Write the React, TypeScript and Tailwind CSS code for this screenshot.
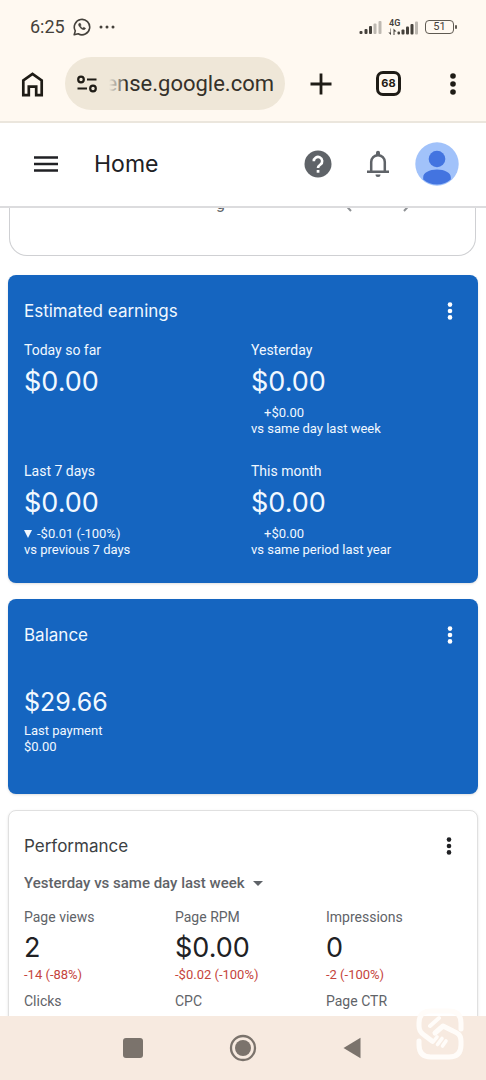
import type { ReactNode } from "react";

type Metric = { label: string; value?: string; change?: string; note?: string; down?: boolean };

const earnings: Metric[] = [
  { label: "Today so far", value: "$0.00" },
  { label: "Yesterday", value: "$0.00", change: "+$0.00", note: "vs same day last week" },
  { label: "Last 7 days", value: "$0.00", change: "-$0.01 (-100%)", note: "vs previous 7 days", down: true },
  { label: "This month", value: "$0.00", change: "+$0.00", note: "vs same period last year" },
];

const performance: Metric[] = [
  { label: "Page views", value: "2", change: "-14 (-88%)" },
  { label: "Page RPM", value: "$0.00", change: "-$0.02 (-100%)" },
  { label: "Impressions", value: "0", change: "-2 (-100%)" },
  { label: "Clicks" },
  { label: "CPC" },
  { label: "Page CTR" },
];

function Dots({ className }: { className: string }) {
  return (
    <svg viewBox="0 0 24 24" fill="currentColor" className={className} aria-hidden="true">
      <circle cx="12" cy="5.6" r="2.3" />
      <circle cx="12" cy="12" r="2.3" />
      <circle cx="12" cy="18.4" r="2.3" />
    </svg>
  );
}

function StatusBar() {
  return (
    <div className="flex h-[54px] items-center justify-between pr-[29px] pl-[30px] text-[#45413b]">
      <div className="flex items-center gap-2">
        <span className="font-[Roboto,sans-serif] text-lg">6:25</span>
        <svg viewBox="0 0 18 18" className="size-[18px]" fill="none" stroke="currentColor" aria-hidden="true">
          <path d="M1.2 16.8 2.3 12.9A7.7 7.7 0 1 1 5.2 15.8Z" strokeWidth="1.6" strokeLinejoin="round" />
          <path d="M6.2 5.3c-1 .8-.9 2.2.8 4.1 1.9 2 3.9 2.9 5.2 1.7l.4-.8-1.9-1-1 .9C8.6 9.7 7.9 8.9 7.400 8l.7-.9-.9-1.900Z" fill="currentColor" strokeWidth=".5" />
        </svg>
        <svg viewBox="0 0 16 4" className="h-1 w-4" fill="currentColor" aria-hidden="true">
          <circle cx="2" cy="2" r="1.5" />
          <circle cx="8" cy="2" r="1.5" />
          <circle cx="14" cy="2" r="1.5" />
        </svg>
      </div>
      <div className="flex items-center gap-[6px]">
        <svg viewBox="0 0 23 15" className="h-[15px] w-[23px]" fill="currentColor" aria-hidden="true">
          <rect x="0.5" y="11" width="3" height="3" rx="1" />
          <rect x="5.5" y="9" width="3" height="5" rx="1" />
          <rect x="10" y="6" width="3" height="8" rx="1" />
          <rect x="14.5" y="3.5" width="3" height="10.5" rx="1" opacity=".35" />
          <rect x="19.5" y="1" width="3" height="13" rx="1" opacity=".35" />
        </svg>
        <svg viewBox="0 0 31 18" className="h-[18px] w-[31px]" fill="currentColor" aria-label="4G">
          <text x="1" y="8" fontSize="9" fontWeight="600" fontFamily="Roboto, sans-serif">4G</text>
          <path d="M2.5 10.5v4H.3L3 17v-6.5ZM5.5 17v-6.5l3 3H6.500V17Z" />
          <rect x="9.500" y="13.5" width="2.5" height="3" rx="1" />
          <rect x="13.5" y="11.5" width="3" height="5" rx="1" />
          <rect x="18" y="8.5" width="3" height="8" rx="1" />
          <rect x="22.500" y="6" width="3" height="10.5" rx="1" />
          <rect x="27" y="3.5" width="3" height="13" rx="1" opacity=".35" />
        </svg>
        <div className="flex items-center">
          <span className="flex h-[14px] w-[29px] items-center justify-center rounded-[4px] border border-[#5f5a52] font-[Roboto,sans-serif] text-[11px]">
            51
          </span>
          <span className="ml-px h-1 w-[2px] rounded-full bg-[#5f5a52]" />
        </div>
      </div>
    </div>
  );
}

function BrowserBar() {
  return (
    <div className="flex h-[67px] items-start pr-5 pl-5 text-[#1f1c16]">
      <button type="button" aria-label="Home page" className="mt-[17px] mr-5">
        <svg viewBox="0 0 25 26" className="h-[26px] w-[25px]" fill="none" stroke="currentColor" strokeWidth="2.7" aria-hidden="true">
          <path d="M3.300 24.1V9.5L12.5 2.800l9.200 6.700v14.6h-5.500v-8.500H8.800v8.500Z" />
        </svg>
      </button>
      <div className="mt-[3px] flex h-[53px] flex-1 items-center gap-[11px] overflow-hidden rounded-full bg-[#efe7d8] px-[11px]">
        <svg viewBox="0 0 22 18" className="h-[18px] w-[22px] shrink-0" fill="none" stroke="currentColor" strokeWidth="2.2" aria-hidden="true">
          <circle cx="5" cy="4.500" r="2.800" />
          <path d="M11 4.500h9.500M1.500 13.500h9.500" />
          <circle cx="17" cy="13.500" r="2.800" />
        </svg>
        <div className="relative flex h-8 min-w-0 flex-1 justify-end overflow-hidden font-[Roboto,sans-serif] text-[22px] leading-8 text-[#35312a]">
          <span className="whitespace-nowrap">ense.google.com</span>
          <span className="absolute inset-y-0 left-0 w-4 bg-linear-to-r from-[#efe7d8] to-[#efe7d8]/20" />
        </div>
      </div>
      <button type="button" aria-label="New tab" className="mt-[18px] ml-[24px]">
        <svg viewBox="0 0 24 24" className="size-6" stroke="currentColor" strokeWidth="2.8" aria-hidden="true">
          <path d="M12 1.5v21M1.5 12h21" />
        </svg>
      </button>
      <button
        type="button"
        aria-label="68 open tabs"
        className="mt-[17px] ml-[43px] flex size-[25px] items-center justify-center rounded-[7px] border-3 border-[#1f1c16] font-[Inter,sans-serif] text-[11px] font-bold"
      >
        68
      </button>
      <button type="button" aria-label="Browser menu" className="mt-[17px] ml-[39px]">
        <svg viewBox="0 0 26 26" className="size-[26px]" fill="currentColor" aria-hidden="true">
          <circle cx="13" cy="5" r="2.800" />
          <circle cx="13" cy="13" r="2.800" />
          <circle cx="13" cy="21" r="2.800" />
        </svg>
      </button>
    </div>
  );
}

function AppHeader() {
  return (
    <header className="flex h-[85px] shrink-0 items-center border-b-2 border-[#dcdcde] bg-white pr-[27px] pb-[2px] pl-[34px] text-[#202124]">
      <button type="button" aria-label="Main menu">
        <svg viewBox="0 0 24 16" className="h-4 w-6" stroke="currentColor" strokeWidth="2.5" aria-hidden="true">
          <path d="M0 1.5h24M0 8h24M0 14.5h24" />
        </svg>
      </button>
      <h1 className="ml-9 flex-1 font-[Inter,sans-serif] text-[23px] leading-8">Home</h1>
      <button type="button" aria-label="Help" className="text-[#5f6368]">
        <svg viewBox="0 0 28 28" className="size-7" aria-hidden="true">
          <circle cx="14" cy="14" r="13.5" fill="currentColor" />
          <path d="M9.800 11.200a4.200 4.200 0 1 1 6.700 3.300c-1.500 1.100-2.500 1.800-2.500 3.600" fill="none" stroke="#fff" strokeWidth="2.600" />
          <rect x="12.700" y="20" width="2.700" height="2.700" fill="#fff" />
        </svg>
      </button>
      <button type="button" aria-label="Notifications" className="mr-[25px] ml-[34px] text-[#5f6368]">
        <svg viewBox="0 0 24 28" className="h-7 w-6" fill="none" stroke="currentColor" strokeWidth="2.500" aria-hidden="true">
          <path d="M5.200 22v-10a6.800 6.800 0 0 1 13.600 0V22M1 21.800h22" />
          <path d="M10 5.500V2.800a2 2 0 0 1 4 0v2.700ZM9.500 24.500h5a2.500 2.500 0 0 1-5 0Z" fill="currentColor" stroke="none" />
        </svg>
      </button>
      <button type="button" aria-label="Account">
        <svg viewBox="0 0 44 44" className="size-11" aria-hidden="true">
          <circle cx="22" cy="22" r="21.700" fill="#a1c2fa" />
          <circle cx="22" cy="17" r="8.300" fill="#4374e0" />
          <path d="M8.200 37.500v-2.300c0-4.400 6.300-7.600 13.800-7.600s13.800 3.200 13.800 7.600v2.300a21.700 21.700 0 0 1-27.600 0Z" fill="#4374e0" />
        </svg>
      </button>
    </header>
  );
}

function Card({ title, blue, children }: { title: string; blue?: boolean; children: ReactNode }) {
  return (
    <section
      className={
        blue
          ? "rounded-lg bg-[#1565c0] pt-6 pl-4 text-[#f1f8ff] shadow-sm"
          : "rounded-lg border border-[#e0e0e0] bg-white pt-[23px] pb-10 pl-[15px] text-[#5f6368] shadow-sm"
      }
    >
      <div className="flex items-center justify-between pr-4">
        <h2 className={blue ? "font-[Inter,sans-serif] text-[17px] leading-6" : "font-[Inter,sans-serif] text-[17px] leading-6 text-[#3c4043]"}>
          {title}
        </h2>
        <button type="button" aria-label={`${title} options`} className={blue ? "text-white" : "text-[#202124]"}>
          <Dots className="size-6" />
        </button>
      </div>
      {children}
    </section>
  );
}

export default function App() {
  return (
    <div className="flex h-screen flex-col overflow-hidden bg-white font-[Roboto,sans-serif]">
      <div className="shrink-0 border-b-2 border-[#ebe6dd] bg-[#fff9f1]">
        <StatusBar />
        <BrowserBar />
      </div>
      <AppHeader />
      <main className="flex min-h-0 flex-1 flex-col overflow-hidden px-2">
        <div className="-mt-6 mr-[2px] ml-px h-[72px] shrink-0 rounded-b-[18px] border border-t-0 border-[#cfd0d3] text-[#5f6368]">
          <div className="flex h-8 items-end">
            <span className="ml-[206px] flex-1 text-base leading-6">g</span>
            <div className="mr-[63px] mb-1 flex gap-[49px] opacity-70">
              <svg viewBox="0 0 10 16" className="h-4 w-[10px] -scale-x-100" fill="none" stroke="currentColor" strokeWidth="2" aria-hidden="true">
                <path d="m2 2 6 6.500-6 6.500" />
              </svg>
              <svg viewBox="0 0 10 16" className="h-4 w-[10px]" fill="none" stroke="currentColor" strokeWidth="2" aria-hidden="true">
                <path d="m2 2 6 6.500-6 6.500" />
              </svg>
            </div>
          </div>
        </div>
        <div className="mt-[19px] flex flex-col gap-4">
          <Card title="Estimated earnings" blue>
            <div className="mt-[17px] grid grid-cols-2 gap-y-6 pb-[25px]">
              {earnings.map((m) => (
                <div key={m.label}>
                  <p className="text-sm leading-5">{m.label}</p>
                  <p className="mt-px mb-[2px] font-[Inter,sans-serif] text-[27px] leading-[42px]">{m.value}</p>
                  {m.change && (
                    <p className="flex items-center text-[13px] leading-4">
                      <span className="w-[13px]">
                        {m.down && (
                          <svg viewBox="0 0 8 8" className="size-2" fill="currentColor" aria-hidden="true">
                            <path d="M0 0h8L4 8Z" />
                          </svg>
                        )}
                      </span>
                      {m.change}
                    </p>
                  )}
                  {m.note && <p className="text-[13px] leading-4">{m.note}</p>}
                </div>
              ))}
            </div>
          </Card>
          <Card title="Balance" blue>
            <p className="mt-[34px] font-[Inter,sans-serif] text-[25px] leading-[42px]">$29.66</p>
            <div className="pb-[39px] text-[13px] leading-4">
              <p>Last payment</p>
              <p>$0.00</p>
            </div>
          </Card>
          <Card title="Performance">
            <div className="mt-[15px] flex h-5 items-center">
              <select aria-label="Comparison period" className="appearance-none text-[15px] leading-5 font-medium">
                <option>Yesterday vs same day last week</option>
              </select>
              <svg viewBox="0 0 10 5" className="ml-2 h-[5px] w-[10px]" fill="currentColor" aria-hidden="true">
                <path d="M0 0h10L5 5Z" />
              </svg>
            </div>
            <div className="mt-[14px] grid grid-cols-3 gap-y-2">
              {performance.map((m) => (
                <div key={m.label}>
                  <p className="text-sm leading-5">{m.label}</p>
                  {m.value && <p className="mt-[2px] font-[Inter,sans-serif] text-[27px] leading-[38px] text-[#202124]">{m.value}</p>}
                  {m.change && <p className="text-[13px] leading-4 text-[#c5443c]">{m.change}</p>}
                </div>
              ))}
            </div>
          </Card>
        </div>
      </main>
      <nav className="relative grid h-16 shrink-0 grid-cols-[1fr_auto_1fr] items-center bg-[#f7eae0] text-[#7b736c]">
        <button type="button" aria-label="Recent apps" className="mr-[86px] justify-self-end">
          <svg viewBox="0 0 20 20" className="size-5" fill="currentColor" aria-hidden="true">
            <rect width="20" height="20" rx="3" />
          </svg>
        </button>
        <button type="button" aria-label="Device home">
          <svg viewBox="0 0 28 28" className="size-7" aria-hidden="true">
            <circle cx="14" cy="14" r="12" fill="none" stroke="currentColor" strokeWidth="2.300" />
            <circle cx="14" cy="14" r="8" fill="currentColor" />
          </svg>
        </button>
        <button type="button" aria-label="Back" className="ml-[86px] justify-self-start">
          <svg viewBox="0 0 18 22" className="h-[22px] w-[18px]" fill="currentColor" aria-hidden="true">
            <path d="M17.500.8v20.400L.5 11Z" />
          </svg>
        </button>
        <svg
          viewBox="0 0 48 52"
          className="absolute right-[22px] bottom-5 h-[52px] w-12"
          fill="none"
          stroke="#fffcf9"
          strokeWidth="5"
          strokeLinecap="round"
          strokeLinejoin="round"
          aria-hidden="true"
        >
          <path d="M45 21v-6C45 7 41 3 33 3H15C7 3 3 7 3 15v3c0 5 2 7 5 9l8 6" />
          <path d="M3 33v4c0 8 4 12 12 12h18c8 0 12-4 12-12v-4c0-6-3-8-8-10l-10-5-8 7" />
          <path d="M14 18l9-8" strokeWidth="4" />
          <path d="M17 34l4-5M21.500 36.500l4.500-6M26.500 38l3.500-5" strokeWidth="3.600" />
        </svg>
      </nav>
    </div>
  );
}
